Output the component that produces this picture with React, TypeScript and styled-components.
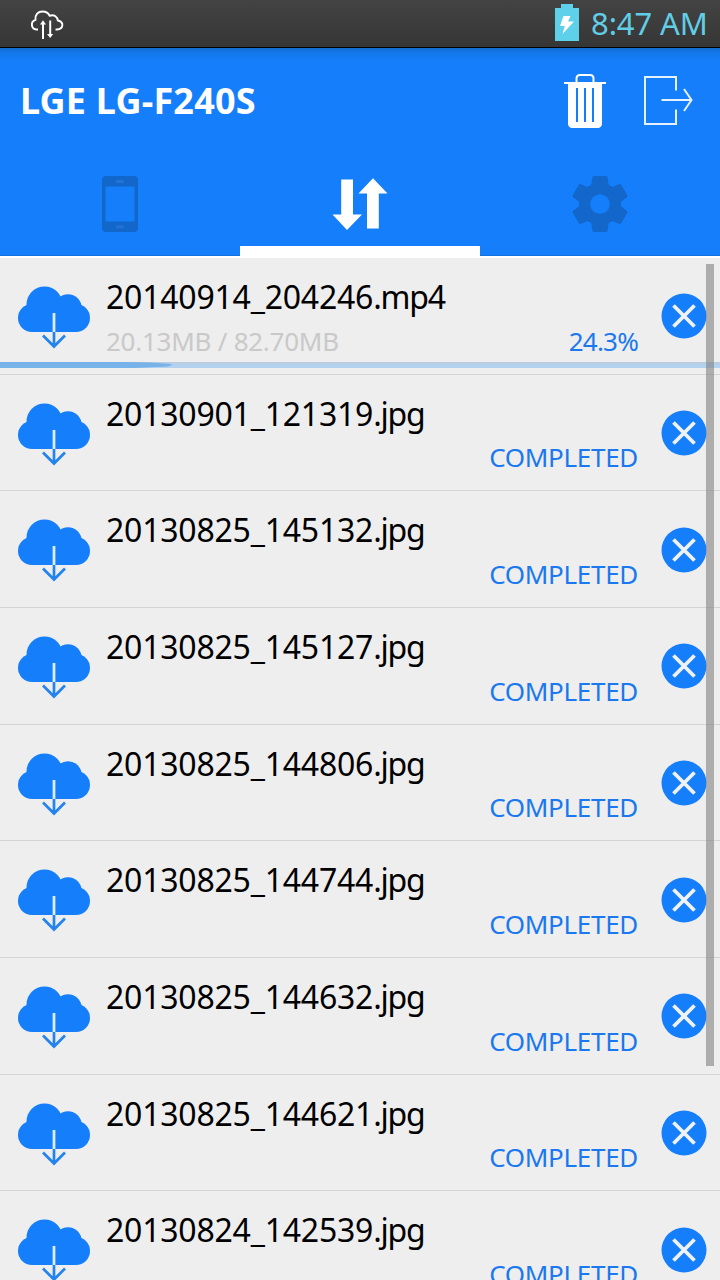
import React from "react";
import styled, { createGlobalStyle } from "styled-components";

const BLUE = "#157efb";

const GlobalStyle = createGlobalStyle`
  * { box-sizing: border-box; }
  html, body { margin: 0; padding: 0; overflow: hidden; }
  body { font-family: "Noto Sans", "Open Sans", sans-serif; }
`;

const Screen = styled.div`
  width: 720px;
  height: 1280px;
  overflow: hidden;
  display: flex;
  flex-direction: column;
  background: #eeeeee;
  position: relative;
`;

const StatusBar = styled.div`
  height: 48px;
  flex: none;
  display: flex;
  align-items: flex-start;
  background: linear-gradient(#434343, #363636);
  border-bottom: 1px solid #000;
  padding: 0 0 0 30px;
`;

const CloudSync = styled.svg`
  margin-top: 9px;
  margin-right: auto;
`;

const Battery = styled.svg`
  margin-top: 3px;
  margin-right: 12px;
`;

const Clock = styled.div`
  width: 129px;
  margin-top: 1px;
  font-size: 31px;
  line-height: 44px;
  letter-spacing: -0.1px;
  color: #61cde6;
  white-space: nowrap;
`;

const Header = styled.header`
  flex: none;
  height: 210px;
  display: flex;
  flex-direction: column;
  background: linear-gradient(#146cd0 0, #1478ec 5px, ${BLUE} 13px);
  border-bottom: 2px solid #fff;
`;

const TitleRow = styled.div`
  height: 104px;
  display: flex;
  align-items: center;
  padding: 0 27px 0 20px;
`;

const Title = styled.h1`
  margin: 2px auto 0 0;
  font-size: 36px;
  line-height: 44px;
  font-weight: 700;
  letter-spacing: 0.2px;
  color: #fff;
  white-space: nowrap;
`;

const ExitIcon = styled.svg`
  margin-left: 36px;
`;

const Tabs = styled.nav`
  height: 104px;
  display: grid;
  grid-template-columns: repeat(3, 1fr);
`;

const Tab = styled.div<{ $active?: boolean }>`
  display: flex;
  justify-content: center;
  padding-top: 22px;
  border-bottom: ${(p) => (p.$active ? "10px solid #fff" : "1px solid #1370df")};
`;

const List = styled.div`
  flex: 1;
  min-height: 0;
  overflow: hidden;
`;

const Row = styled.div`
  height: 116.667px;
  display: flex;
  align-items: flex-start;
  padding-left: 17px;
  border-bottom: 1px solid #d4d4d4;
  position: relative;
`;

const CloudIcon = styled.svg`
  flex: none;
  margin-top: 27px;
`;

const Info = styled.div`
  margin-left: 15px;
  width: 532px;
  padding-top: 17px;
`;

const FileName = styled.div`
  font-size: 32px;
  line-height: 44px;
  letter-spacing: -0.22px;
  color: #000;
  white-space: nowrap;
`;

const Extension = styled.span`
  letter-spacing: -1.2px;
`;

const Meta = styled.div`
  display: flex;
  justify-content: space-between;
  font-size: 26px;
  line-height: 36px;
  margin-top: 3.6px;
  white-space: nowrap;
`;

const Size = styled.span`
  color: #c9c9c9;
  letter-spacing: -0.25px;
`;

const Status = styled.span<{ $numeric: boolean }>`
  color: #1a78f0;
  letter-spacing: ${(p) => (p.$numeric ? "-0.8px" : "-0.3px")};
`;

const CloseIcon = styled.svg`
  flex: none;
  margin: 35.4px 0 0 23px;
`;

const Progress = styled.div`
  position: absolute;
  left: 0;
  right: 0;
  bottom: 5.667px;
  height: 6px;
  background: linear-gradient(#bccbdd, #b2d2f0 60%);
`;

const ProgressFill = styled.div`
  height: 6px;
  background: #77b2e8;
  border-radius: 0 50px 50px 0 / 0 3px 3px 0;
`;

const Scrollbar = styled.div`
  position: absolute;
  top: 264px;
  right: 6px;
  width: 8px;
  height: 802px;
  background: rgba(120, 120, 120, 0.55);
  border: 1px solid rgba(170, 170, 170, 0.3);
`;

interface Transfer {
  name: string;
  ext: string;
  size?: string;
  percent?: number;
}

const transfers: Transfer[] = [
  { name: "20140914_204246", ext: ".mp4", size: "20.13MB / 82.70MB", percent: 24.3 },
  { name: "20130901_121319", ext: ".jpg" },
  { name: "20130825_145132", ext: ".jpg" },
  { name: "20130825_145127", ext: ".jpg" },
  { name: "20130825_144806", ext: ".jpg" },
  { name: "20130825_144744", ext: ".jpg" },
  { name: "20130825_144632", ext: ".jpg" },
  { name: "20130825_144621", ext: ".jpg" },
  { name: "20130824_142539", ext: ".jpg" },
];

function TransferRow({ name, ext, size, percent }: Transfer) {
  return (
    <Row>
      <CloudIcon width="74" height="66" viewBox="0 0 74 66">
        <g fill={BLUE}>
          <circle cx="27.500" cy="19.500" r="18" />
          <circle cx="51" cy="23" r="13.700" />
          <circle cx="15" cy="33" r="14" />
          <circle cx="59" cy="33" r="14" />
          <path d="M15 20H59V47H15Z" />
        </g>
        <path d="M37 28V47" stroke="#dcecf8" strokeWidth="2.800" />
        <path d="M37 47V61M26 50.500L37 61.500L48 50.500" fill="none" stroke="#2383ef" strokeWidth="2.700" />
      </CloudIcon>
      <Info>
        <FileName>
          {name}
          <Extension>{ext}</Extension>
        </FileName>
        <Meta>
          <Size>{size}</Size>
          <Status $numeric={percent !== undefined}>
            {percent ? `${percent}%` : "COMPLETED"}
          </Status>
        </Meta>
      </Info>
      <CloseIcon width="46" height="46" viewBox="0 0 46 46">
        <circle cx="23" cy="23" r="22.500" fill={BLUE} />
        <path d="M12.500 12.500L33.500 33.500M33.500 12.500L12.500 33.500" stroke="#eff2f7" strokeWidth="3.800" />
      </CloseIcon>
      {percent && (
        <Progress>
          <ProgressFill style={{ width: `${percent - 0.4}%` }} />
        </Progress>
      )}
    </Row>
  );
}

export default function App() {
  return (
    <>
      <GlobalStyle />
      <Screen>
        <StatusBar>
          <CloudSync width="34" height="31" viewBox="0 0 34 31" fill="none" stroke="#fff">
            <path
              d="M8 20.500H6.500C0.800 20 0.300 12.500 5.500 10.800C5 5.500 8 2.500 12.500 2.500C16.500 2.500 18.500 4 19.500 6.800C24.500 5 27.500 8 27.800 11.500C34.500 13 33.500 20 27 20.500H25.500"
              strokeWidth="1.900"
              strokeLinejoin="round"
            />
            <path d="M13 14.500V30M20.200 11.500V26" strokeWidth="2" />
            <path d="M10 15.500L13 11.300L16 15.500ZM17 25L20.200 29L23.200 25Z" fill="#fff" stroke="none" />
          </CloudSync>
          <Battery width="24" height="38" viewBox="0 0 24 38">
            <path d="M0 5H6V1H18V5H24V38H0Z" fill="#5fd0e9" />
            <path d="M8.500 13H15.500L13 18.500H19L7.500 31L9.800 23H5Z" fill="#fff" />
          </Battery>
          <Clock>8:47 AM</Clock>
        </StatusBar>
        <Header>
          <TitleRow>
            <Title>LGE LG-F240S</Title>
            <svg width="44" height="56" viewBox="0 0 44 56">
              <path d="M13.500 11V6.500C13.500 4 14.500 3 17 3H27C29.500 3 30.500 4 30.500 6.500V11" fill="none" stroke="#fff" strokeWidth="2" />
              <path d="M1 10H43V12H39V51C39 54.500 37.500 56 34 56H10C6.500 56 5 54.500 5 51V12H1Z" fill="#fff" />
              <path d="M14 16V50M22 16V50M30 16V50" stroke={BLUE} strokeWidth="2" />
            </svg>
            <ExitIcon width="50" height="50" viewBox="0 0 50 50" fill="none" stroke="#e6f1ff" strokeWidth="2">
              <path d="M33 15.500V2H2V49H33V34.500" />
              <path d="M18.500 25H48M41 14L48.500 25L41 36" />
            </ExitIcon>
          </TitleRow>
          <Tabs>
            <Tab>
              <svg width="36" height="60" viewBox="0 0 36 60">
                <path
                  fill="#1366ca"
                  fillRule="evenodd"
                  d="M4 2H32Q36 2 36 6V54Q36 58 32 58H4Q0 58 0 54V6Q0 2 4 2ZM3.500 12.500V47.500H32.500V12.500Z"
                />
                <path d="M14 7.500H21.500M14 53H21.500" stroke="#2473d2" strokeWidth="3" />
              </svg>
            </Tab>
            <Tab $active>
              <svg width="56" height="60" viewBox="0 0 56 60" fill="#fff">
                <path d="M9.200 5.500H21V40.500H30L15 56L0.500 40.500H9.200Z" />
                <path d="M41 4.200L55.500 19.500H46.800V54.500H35V19.500H26.500Z" />
              </svg>
            </Tab>
            <Tab>
              <svg width="60" height="60" viewBox="-30 -30 60 60" fill="#1366ca">
                <circle r="15.300" fill="none" stroke="#1366ca" strokeWidth="11" />
                {[0, 60, 120, 180, 240, 300].map((angle) => (
                  <path key={angle} transform={`rotate(${angle})`} d="M-6.500 -28H6.500L7.500 -27L8.500 -20L10.500 -17.500H-10.500L-8.500 -20L-7.500 -27Z" />
                ))}
              </svg>
            </Tab>
          </Tabs>
        </Header>
        <List>
          {transfers.map((t) => (
            <TransferRow key={t.name} {...t} />
          ))}
        </List>
        <Scrollbar />
      </Screen>
    </>
  );
}
